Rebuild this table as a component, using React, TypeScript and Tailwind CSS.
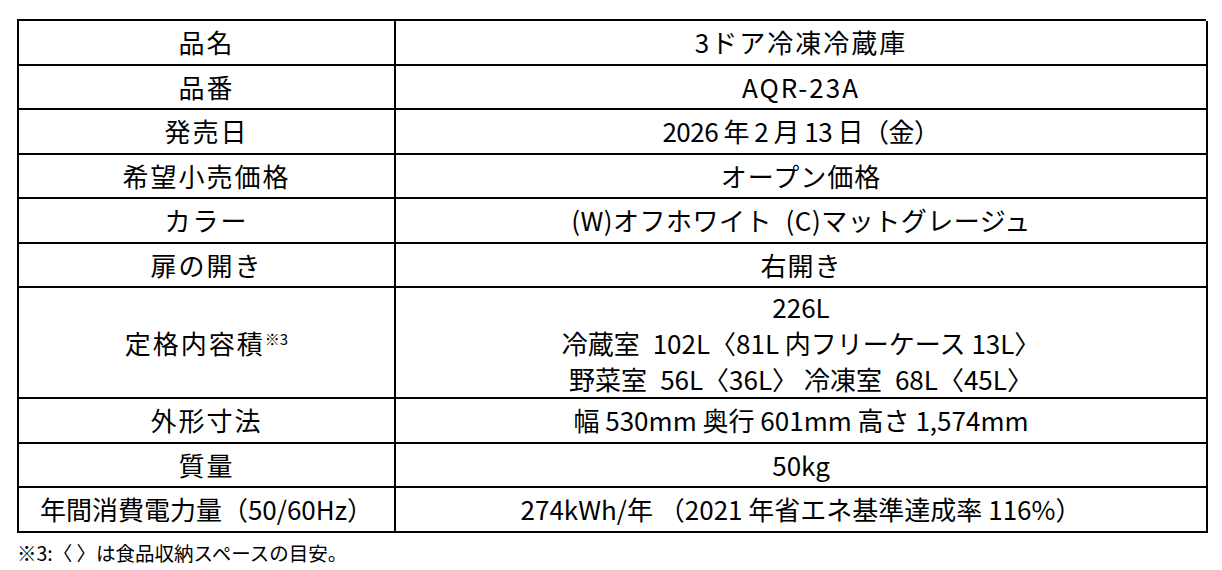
import React from "react";

type Row = {
  label: React.ReactNode;
  value: React.ReactNode;
  lc?: string;
  vc?: string;
  tall?: boolean;
};

const rows: Row[] = [
  { label: "品名", value: "3ドア冷凍冷蔵庫", lc: "tracking-[2px]", vc: "tracking-[2px]" },
  { label: "品番", value: "AQR-23A", lc: "tracking-[2px]", vc: "tracking-[2px]" },
  { label: "発売日", value: "2026 年 2 月 13 日（金）", lc: "tracking-[2px]", vc: "tracking-[-0.5px]" },
  { label: "希望小売価格", value: "オープン価格", lc: "tracking-[2px]", vc: "tracking-[1px]" },
  {
    label: "カラー",
    value: "(W)オフホワイト\u2002(C)マットグレージュ",
    lc: "tracking-[2px]",
    vc: "tracking-[0.5px]",
  },
  { label: "扉の開き", value: "右開き", lc: "tracking-[2px]", vc: "tracking-[1px]" },
  {
    label: (
      <>
        定格内容積
        <span className="text-[15px] tracking-normal relative -top-[9px]">※3</span>
      </>
    ),
    value: (
      <div className="flex flex-col items-center leading-[36px]">
        <span>226L</span>
        <span>冷蔵室{"\u2002"}102L〈81L 内フリーケース 13L〉</span>
        <span>野菜室{"\u2002"}56L〈36L〉 冷凍室{"\u2002"}68L〈45L〉</span>
      </div>
    ),
    lc: "tracking-[2px]",
    tall: true,
  },
  { label: "外形寸法", value: "幅 530mm 奥行 601mm 高さ 1,574mm", lc: "tracking-[2px]" },
  { label: "質量", value: "50kg", lc: "tracking-[2px]" },
  { label: "年間消費電力量（50/60Hz）", value: "274kWh/年 （2021 年省エネ基準達成率 116%）" },
];

export default function App() {
  return (
    <div
      className="w-[1222px] h-[570px] bg-white text-black pl-[17px] pt-[19px]"
      style={{ fontFamily: '"Noto Sans CJK JP", "Noto Sans", sans-serif' }}
    >
      <div className="w-[1189px] border-t-2 border-l-2 border-black">
        {rows.map((r, i) => (
          <div
            key={i}
            className={`grid grid-cols-[377px_812px] ${r.tall ? "h-[111px]" : "h-[44.5px]"}`}
          >
            <div
              className={`flex items-center justify-center border-r-2 border-b-2 border-black text-[26px] leading-none ${r.lc ?? ""}`}
            >
              <span>{r.label}</span>
            </div>
            <div
              className={`flex items-center justify-center border-r-2 border-b-2 border-black text-[26px] leading-none ${r.vc ?? ""}`}
            >
              {r.value}
            </div>
          </div>
        ))}
      </div>
      <div className="mt-[10px] text-[19.5px] leading-none">※3:〈 〉は食品収納スペースの目安。</div>
    </div>
  );
}
